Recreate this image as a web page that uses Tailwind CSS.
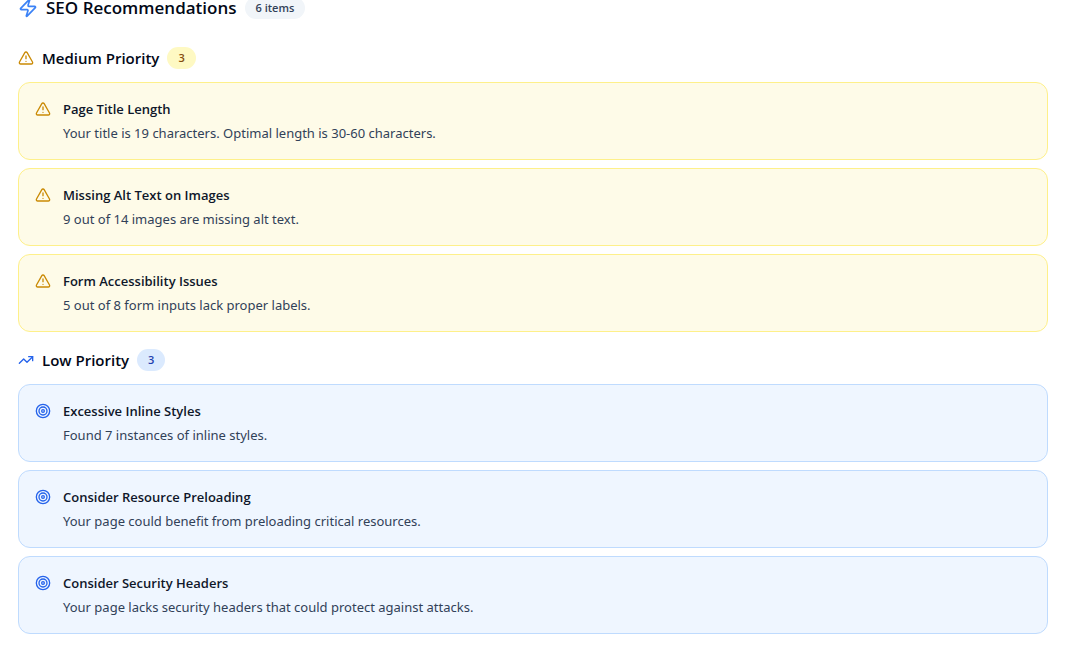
<!DOCTYPE html>
<html lang="en">
<head>
<meta charset="utf-8">
<meta name="viewport" content="width=device-width, initial-scale=1">
<title>SEO Recommendations</title>
<script src="https://cdn.jsdelivr.net/npm/@tailwindcss/browser@4"></script>
</head>
<body class="bg-white font-['Segoe_UI','Open_Sans',sans-serif] text-[#020817]">
<svg class="hidden" aria-hidden="true">
  <symbol id="zap" viewBox="0 0 24 24"><path d="M4 14a1 1 0 0 1-.78-1.63l9.9-10.2a.5.5 0 0 1 .86.46l-1.92 6.02A1 1 0 0 0 13 10h7a1 1 0 0 1 .78 1.63l-9.9 10.2a.5.5 0 0 1-.86-.46l1.92-6.02A1 1 0 0 0 11 14z"/></symbol>
  <symbol id="warning" viewBox="0 0 24 24"><path d="m21.73 18-8-14a2 2 0 0 0-3.48 0l-8 14A2 2 0 0 0 4 21h16a2 2 0 0 0 1.73-3"/><path d="M12 9v4"/><path d="M12 17h.01"/></symbol>
  <symbol id="trend" viewBox="0 0 24 24"><path d="M22 7 13.5 15.5 8.5 10.5 2 17"/><path d="M16 7h6v6"/></symbol>
  <symbol id="target" viewBox="0 0 24 24"><circle cx="12" cy="12" r="10"/><circle cx="12" cy="12" r="6"/><circle cx="12" cy="12" r="2"/></symbol>
</svg>
<main class="px-[18px] pb-[18px]">
  <header class="flex h-4 items-center gap-2">
    <svg class="size-5 shrink-0 fill-none stroke-[#3b82f6] stroke-2 [stroke-linecap:round] [stroke-linejoin:round]"><use href="#zap"/></svg>
    <h1 class="text-[17px] leading-4 font-semibold">SEO Recommendations</h1>
    <span class="rounded-full bg-slate-100 px-[11px] py-[3px] text-[11px] leading-4 font-semibold text-slate-700">6 items</span>
  </header>

  <div class="mt-[30px] space-y-4">
    <section>
      <div class="mb-3 flex h-6 items-center gap-2">
        <svg class="size-4 shrink-0 fill-none stroke-[#ca8a04] stroke-2 [stroke-linecap:round] [stroke-linejoin:round]"><use href="#warning"/></svg>
        <h2 class="text-[15px] leading-6 font-semibold">Medium Priority</h2>
        <span class="rounded-full bg-[#fef9c3] px-[11px] py-[3px] text-[11px] leading-4 font-semibold text-[#854d0e]">3</span>
      </div>
      <ul class="space-y-2">
        <li class="flex items-start gap-3 rounded-xl border border-[#fef08a] bg-[#fefbe8] p-4">
          <svg class="mt-0.5 size-4 shrink-0 fill-none stroke-[#ca8a04] stroke-2 [stroke-linecap:round] [stroke-linejoin:round]"><use href="#warning"/></svg>
          <div class="min-w-0 flex-1">
            <h3 class="mb-1 text-[13px] leading-5 font-semibold text-[#0f172a]">Page Title Length</h3>
            <p class="font-['Segoe_UI','Noto_Sans',sans-serif] text-[13px] leading-5 text-slate-700">Your title is 19 characters. Optimal length is 30-60 characters.</p>
          </div>
        </li>
        <li class="flex items-start gap-3 rounded-xl border border-[#fef08a] bg-[#fefbe8] p-4">
          <svg class="mt-0.5 size-4 shrink-0 fill-none stroke-[#ca8a04] stroke-2 [stroke-linecap:round] [stroke-linejoin:round]"><use href="#warning"/></svg>
          <div class="min-w-0 flex-1">
            <h3 class="mb-1 text-[13px] leading-5 font-semibold text-[#0f172a]">Missing Alt Text on Images</h3>
            <p class="font-['Segoe_UI','Noto_Sans',sans-serif] text-[13px] leading-5 text-slate-700">9 out of 14 images are missing alt text.</p>
          </div>
        </li>
        <li class="flex items-start gap-3 rounded-xl border border-[#fef08a] bg-[#fefbe8] p-4">
          <svg class="mt-0.5 size-4 shrink-0 fill-none stroke-[#ca8a04] stroke-2 [stroke-linecap:round] [stroke-linejoin:round]"><use href="#warning"/></svg>
          <div class="min-w-0 flex-1">
            <h3 class="mb-1 text-[13px] leading-5 font-semibold text-[#0f172a]">Form Accessibility Issues</h3>
            <p class="font-['Segoe_UI','Noto_Sans',sans-serif] text-[13px] leading-5 text-slate-700">5 out of 8 form inputs lack proper labels.</p>
          </div>
        </li>
      </ul>
    </section>

    <section>
      <div class="mb-3 flex h-6 items-center gap-2">
        <svg class="size-4 shrink-0 fill-none stroke-[#2563eb] stroke-2 [stroke-linecap:round] [stroke-linejoin:round]"><use href="#trend"/></svg>
        <h2 class="text-[15px] leading-6 font-semibold">Low Priority</h2>
        <span class="rounded-full bg-[#dbeafe] px-[11px] py-[3px] text-[11px] leading-4 font-semibold text-[#1e40af]">3</span>
      </div>
      <ul class="space-y-2">
        <li class="flex items-start gap-3 rounded-xl border border-[#bfdbfe] bg-[#eff6ff] p-4">
          <svg class="mt-0.5 size-4 shrink-0 fill-none stroke-[#2563eb] stroke-2 [stroke-linecap:round] [stroke-linejoin:round]"><use href="#target"/></svg>
          <div class="min-w-0 flex-1">
            <h3 class="mb-1 text-[13px] leading-5 font-semibold text-[#0f172a]">Excessive Inline Styles</h3>
            <p class="font-['Segoe_UI','Noto_Sans',sans-serif] text-[13px] leading-5 text-slate-700">Found 7 instances of inline styles.</p>
          </div>
        </li>
        <li class="flex items-start gap-3 rounded-xl border border-[#bfdbfe] bg-[#eff6ff] p-4">
          <svg class="mt-0.5 size-4 shrink-0 fill-none stroke-[#2563eb] stroke-2 [stroke-linecap:round] [stroke-linejoin:round]"><use href="#target"/></svg>
          <div class="min-w-0 flex-1">
            <h3 class="mb-1 text-[13px] leading-5 font-semibold text-[#0f172a]">Consider Resource Preloading</h3>
            <p class="font-['Segoe_UI','Noto_Sans',sans-serif] text-[13px] leading-5 text-slate-700">Your page could benefit from preloading critical resources.</p>
          </div>
        </li>
        <li class="flex items-start gap-3 rounded-xl border border-[#bfdbfe] bg-[#eff6ff] p-4">
          <svg class="mt-0.5 size-4 shrink-0 fill-none stroke-[#2563eb] stroke-2 [stroke-linecap:round] [stroke-linejoin:round]"><use href="#target"/></svg>
          <div class="min-w-0 flex-1">
            <h3 class="mb-1 text-[13px] leading-5 font-semibold text-[#0f172a]">Consider Security Headers</h3>
            <p class="font-['Segoe_UI','Noto_Sans',sans-serif] text-[13px] leading-5 text-slate-700">Your page lacks security headers that could protect against attacks.</p>
          </div>
        </li>
      </ul>
    </section>
  </div>
</main>
</body>
</html>
